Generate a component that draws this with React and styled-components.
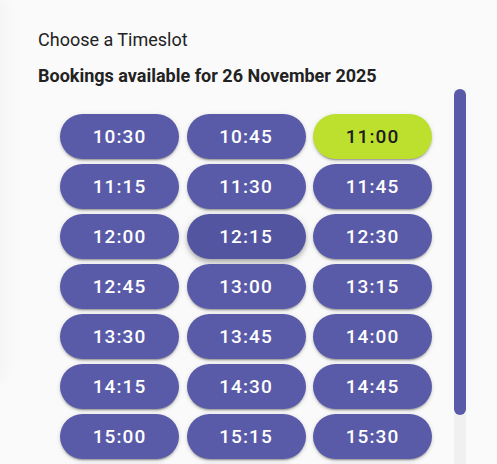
import React from 'react';
import styled, { createGlobalStyle } from 'styled-components';

const GlobalStyle = createGlobalStyle`
    html, body {
        margin: 0;
        padding: 0;
        overflow: hidden;
        background: #fafafa;
        font-family: Roboto, "Liberation Sans", Arial, sans-serif;
    }
`;

const Page = styled.div`
    display: flex;
    align-items: flex-start;
    height: 464px;
    overflow: hidden;
    background: #fafafa;
`;

// neighbouring card, only its shadow shows at the left edge
const SidePanel = styled.div`
    width: 0;
    height: 378px;
    box-shadow: 0 0 14px 2px rgba(0, 0, 0, 0.09);
`;

const Main = styled.div`
    flex: 1;
    padding: 26px 31px 0 38px;
`;

const Title = styled.h2`
    margin: 0;
    font-size: 18px;
    line-height: 27px;
    font-weight: 400;
    color: #222;
`;

const Subtitle = styled.h3`
    margin: 11px 0 0;
    font-size: 18px;
    line-height: 24px;
    font-weight: 700;
    color: #222;
`;

const Scroller = styled.div`
    margin-top: 1px;
    height: 400px;
    display: flex;
`;

const SlotList = styled.div`
    flex: 1;
    overflow: hidden;
    padding: 25px 0 21px;
`;

const ScrollTrack = styled.div`
    width: 12px;
    background: #f0f0f0;
`;

const ScrollThumb = styled.div`
    height: 326px;
    border-radius: 6px;
    background: #5a5ba8;
`;

const SlotGrid = styled.div`
    display: grid;
    grid-template-columns: repeat(3, 119px);
    column-gap: 7.5px;
    row-gap: 5px;
    justify-content: center;
`;

const SlotButton = styled.button`
    height: 45px;
    padding: 0;
    border: none;
    border-radius: 23px;
    background: ${p => p.selected ? '#bde02f' : p.hovered ? '#5455a1' : '#5a5ba8'};
    color: ${p => p.selected ? '#1b1b1b' : '#ffffff'};
    font-family: Roboto, "Liberation Sans", Arial, sans-serif;
    font-size: 19px;
    font-weight: 500;
    letter-spacing: 1.1px;
    cursor: pointer;
    box-shadow: ${p => p.hovered
        ? '0 2px 4px -1px rgba(0,0,0,0.2), 0 4px 5px 0 rgba(0,0,0,0.14), 0 1px 10px 0 rgba(0,0,0,0.12)'
        : '0 3px 1px -2px rgba(0,0,0,0.2), 0 2px 2px 0 rgba(0,0,0,0.14), 0 1px 5px 0 rgba(0,0,0,0.12)'};
`;

function makeSlots() {
    const slots = [];
    for (let m = 10 * 60 + 30; m <= 17 * 60; m += 15) {
        const h = Math.floor(m / 60);
        const mm = String(m % 60).padStart(2, '0');
        slots.push(`${h}:${mm}`);
    }
    return slots;
}

export default function App() {
    const slots = makeSlots();

    return (
        <Page>
            <GlobalStyle />
            <SidePanel />
            <Main>
                <Title>Choose a Timeslot</Title>
                <Subtitle>Bookings available for 26 November 2025</Subtitle>
                <Scroller>
                    <SlotList>
                        <SlotGrid>
                            {slots.map(t => (
                                <SlotButton key={t} selected={t === '11:00'} hovered={t === '12:15'}>
                                    {t}
                                </SlotButton>
                            ))}
                        </SlotGrid>
                    </SlotList>
                    <ScrollTrack>
                        <ScrollThumb />
                    </ScrollTrack>
                </Scroller>
            </Main>
        </Page>
    );
}
